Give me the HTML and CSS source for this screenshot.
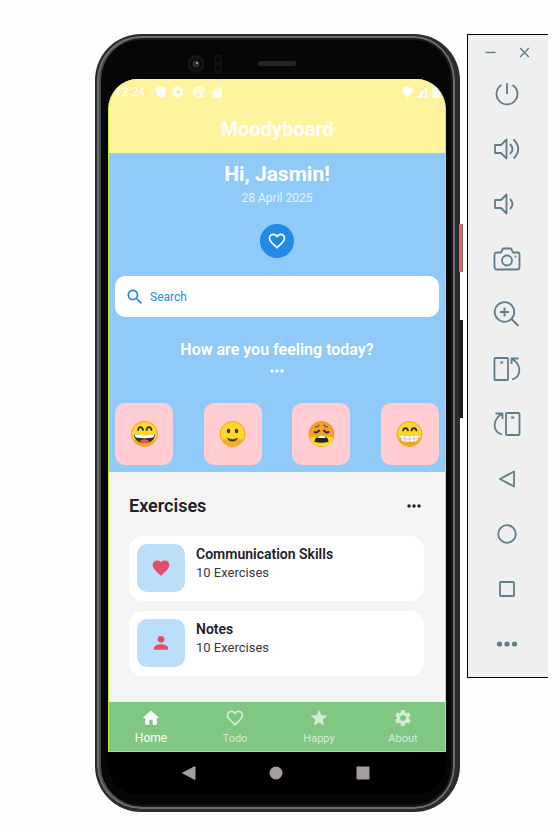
FILE: index.html
```html
<!DOCTYPE html>
<html lang="en">
<head>
<meta charset="utf-8">
<meta name="viewport" content="width=device-width, initial-scale=1">
<title>Moodyboard</title>
<link rel="stylesheet" href="styles.css">
</head>
<body>
<svg class="defs" aria-hidden="true">
  <symbol id="heart-line" viewBox="0 0 24 24"><path d="M16.500 3c-1.740 0-3.410.81-4.500 2.090C10.910 3.810 9.240 3 7.500 3 4.420 3 2 5.420 2 8.500c0 3.780 3.400 6.860 8.550 11.540L12 21.350l1.450-1.320C18.600 15.360 22 12.280 22 8.500 22 5.420 19.580 3 16.500 3zm-4.400 15.550l-.1.1-.1-.1C7.140 14.240 4 11.390 4 8.500 4 6.500 5.500 5 7.500 5c1.540 0 3.040.99 3.570 2.360h1.870C13.460 5.990 14.960 5 16.500 5c2 0 3.500 1.500 3.500 3.500 0 2.890-3.140 5.740-7.900 10.050z"/></symbol>
  <symbol id="heart" viewBox="0 0 24 24"><path d="M12 21.350l-1.450-1.320C5.400 15.360 2 12.280 2 8.500 2 5.420 4.420 3 7.500 3c1.740 0 3.410.81 4.500 2.090C13.090 3.810 14.760 3 16.500 3 19.580 3 22 5.420 22 8.500c0 3.780-3.400 6.860-8.550 11.540L12 21.350z"/></symbol>
  <symbol id="gear" viewBox="0 0 24 24"><path d="M19.140 12.940c.04-.3.060-.61.060-.94 0-.32-.02-.64-.07-.94l2.030-1.580c.18-.14.23-.41.120-.61l-1.920-3.320c-.12-.22-.37-.29-.59-.22l-2.390.96c-.5-.38-1.030-.7-1.620-.94l-.36-2.540c-.04-.24-.24-.41-.48-.41h-3.840c-.24 0-.43.17-.47.41l-.36 2.540c-.59.24-1.130.57-1.620.94l-2.390-.96c-.22-.08-.47 0-.59.22L2.740 8.870c-.12.21-.08.470.120.610l2.030 1.580c-.05.3-.09.630-.09.940s.020.640.070.940l-2.030 1.580c-.18.140-.23.410-.12.610l1.920 3.320c.12.220.370.290.590.220l2.390-.96c.5.380 1.030.7 1.620.94l.36 2.540c.05.240.240.410.480.410h3.840c.24 0 .44-.17.470-.41l.36-2.540c.59-.24 1.130-.56 1.620-.94l2.390.96c.22.080.470 0 .59-.22l1.920-3.320c.12-.22.070-.47-.12-.61l-2.010-1.580zM12 15.600c-1.980 0-3.600-1.620-3.600-3.600s1.620-3.600 3.600-3.600 3.600 1.620 3.600 3.600-1.620 3.600-3.600 3.600z"/></symbol>
  <symbol id="dots" viewBox="0 0 24 24"><circle cx="4.500" cy="12" r="2.600"/><circle cx="12" cy="12" r="2.600"/><circle cx="19.500" cy="12" r="2.600"/></symbol>
</svg>

<div class="desktop">
  <main class="phone">
    <span class="side-key power-key"></span>
    <span class="side-key volume-key"></span>
    <div class="bezel">
      <div class="sensors">
        <svg class="camera" viewBox="0 0 18 18"><circle cx="9" cy="9" r="9" fill="#151517"/><circle cx="9" cy="9" r="5.500" fill="#0b0b0d"/><circle cx="9" cy="9" r="3.500" fill="#2c2e31"/><circle cx="10" cy="8" r="1.200" fill="#8e9499"/></svg>
        <svg class="sensor" viewBox="0 0 8 18"><rect width="8" height="18" rx="3" fill="#131314"/><circle cx="4" cy="4.500" r="2.500" fill="#08080a"/><circle cx="4" cy="13" r="2.500" fill="#08080a"/></svg>
      </div>
      <span class="speaker"></span>
    </div>

    <div class="screen">
      <header class="app-bar">
        <div class="status">
          <span class="clock">12:24</span>
          <svg class="s-shield" viewBox="0 0 24 24"><path d="M12 1L2 4v7c0 6 4.300 10.500 10 12 5.700-1.500 10-6 10-12V4z"/></svg>
          <svg class="s-gear"><use href="#gear"/></svg>
          <svg class="s-radar" viewBox="0 0 24 24"><path d="M19.500 19.500A10.500 10.500 0 1 1 22.300 14M7 14.500A5.500 5.500 0 1 1 15.500 16M12 12l7.500 7.500M17 21h5" fill="none" stroke="currentColor" stroke-width="2.600"/><circle cx="12" cy="12" r="2.200"/></svg>
          <svg class="s-card" viewBox="0 0 24 24"><path fill-rule="evenodd" d="M21 1H10L2.500 8.500V21a2 2 0 0 0 2 2H19.500a2 2 0 0 0 2-2V2zM9 5h2v4H9zm4 0h2v4h-2zm4 0h2v4h-2z"/></svg>
          <span class="spacer"></span>
          <svg class="s-wifi" viewBox="0 0 24 22"><path d="M12 22L0 6C2 2.500 7 0 12 0s10 2.500 12 6z"/></svg>
          <svg class="s-signal" viewBox="0 0 22 22"><path fill-rule="evenodd" d="M22 0v22H0zM19.500 6L14 11.500V19.500h5.500z"/></svg>
          <svg class="s-battery" viewBox="0 0 14 22"><path d="M4 0h6v2h4v20H0V2h4z"/></svg>
        </div>
        <h1 class="brand">Moodyboard</h1>
      </header>

      <section class="today">
        <h2 class="greeting">Hi, Jasmin!</h2>
        <p class="date">28 April 2025</p>
        <button class="fav" type="button" aria-label="Favourite"><svg><use href="#heart-line"/></svg></button>
        <label class="search">
          <svg viewBox="0 0 24 24"><path d="M15.500 14h-.79l-.28-.27C15.410 12.590 16 11.110 16 9.500 16 5.910 13.090 3 9.500 3S3 5.910 3 9.500 5.910 16 9.500 16c1.610 0 3.090-.59 4.230-1.570l.27.28v.79l5 4.990L20.490 19l-4.990-5zm-6 0C7.010 14 5 11.990 5 9.500S7.010 5 9.500 5 14 7.010 14 9.500 11.990 14 9.500 14z"/></svg>
          <input type="text" placeholder="Search" aria-label="Search">
        </label>
        <h3 class="question">How are you feeling today?</h3>
        <button class="more" type="button" aria-label="More moods"><svg><use href="#dots"/></svg></button>
        <div class="moods">
          <button class="mood" type="button" aria-label="Happy">
            <svg viewBox="0 0 54 52"><ellipse cx="27" cy="26" rx="26" ry="25" fill="#fcd928" stroke="#f2a126" stroke-width="2"/><path d="M5 37q22 9 44 0C43 55 11 55 5 37z" fill="#f3a326"/><path d="M14 18q1-6 5-6t5 6M31 18q1-6 5-6t5 6" fill="none" stroke="#2b2620" stroke-width="3.500" stroke-linecap="round"/><path d="M6 26q21 5 42 0c0 11-8 18-21 18S6 37 6 26z" fill="#302b2c"/><path d="M7 26q20 5 40 0 0 5-3 7-17 3-34 0-3-2-3-7z" fill="#fff"/><path d="M17 40q10-7 20 0-4 4-10 4t-10-4z" fill="#ee594c"/></svg>
          </button>
          <button class="mood" type="button" aria-label="Good">
            <svg viewBox="0 0 54 52"><ellipse cx="27" cy="26" rx="25" ry="25" fill="#fcd928" stroke="#f2a126" stroke-width="2"/><path d="M4 36q23 3 46 0-6 14-23 14T4 36z" fill="#f5ae27"/><ellipse cx="19" cy="20" rx="3.500" ry="4.500" fill="#3a3025"/><ellipse cx="35" cy="20" rx="3.500" ry="4.500" fill="#3a3025"/><path d="M17 35q10 5 20 0-3 5-10 5t-10-5z" fill="#302820" stroke="#302820" stroke-width="1.500" stroke-linejoin="round"/></svg>
          </button>
          <button class="mood" type="button" aria-label="Weary">
            <svg viewBox="0 0 54 52"><ellipse cx="27" cy="26" rx="25" ry="25" fill="#f5a024" stroke="#eb9724" stroke-width="2"/><path d="M3 33q24-5 48 0-5 18-24 18T3 33z" fill="#fcd928"/><path d="M15 12q5 0 7-4M39 12q-5 0-7-4" fill="none" stroke="#7b4e20" stroke-width="2.500" stroke-linecap="round"/><path d="M13 22q5 3 9-3M41 22q-5 3-9-3" fill="none" stroke="#302820" stroke-width="4" stroke-linecap="round"/><path d="M13 42q0-12 14-12t14 12q-14 3-28 0z" fill="#282425"/><path d="M18 34q3-5 9-5t9 5z" fill="#fff"/></svg>
          </button>
          <button class="mood" type="button" aria-label="Grinning">
            <svg viewBox="0 0 54 52"><ellipse cx="27" cy="26" rx="25" ry="25" fill="#fcd928" stroke="#f2a126" stroke-width="2"/><path d="M4 34q23 9 46 0-5 16-23 16T4 34z" fill="#f3a326"/><path d="M14 19q1-5 5-5t5 5M31 19q1-5 5-5t5 5" fill="none" stroke="#2b2620" stroke-width="3.500" stroke-linecap="round"/><path d="M8 28q19 3 38 0 0 14-11 14H19Q8 42 8 28z" fill="#fff" stroke="#d5a642"/><path d="M10 35q17 3 34 0M18 29v12M27 30v12M36 29v12" fill="none" stroke="#bbb" stroke-width="1.500"/></svg>
          </button>
        </div>
      </section>

      <section class="exercises">
        <div class="section-head">
          <h2>Exercises</h2>
          <button class="more dark" type="button" aria-label="More exercises"><svg><use href="#dots"/></svg></button>
        </div>
        <article class="card">
          <span class="tile"><svg><use href="#heart"/></svg></span>
          <div><h3>Communication Skills</h3><p>10 Exercises</p></div>
        </article>
        <article class="card">
          <span class="tile"><svg viewBox="0 0 24 24"><circle cx="12" cy="7.500" r="4"/><path d="M3.500 20v-2c0-2.700 5-4.500 8.500-4.500s8.500 1.800 8.500 4.500v2z"/></svg></span>
          <div><h3>Notes</h3><p>10 Exercises</p></div>
        </article>
      </section>

      <nav class="tabs">
        <a class="tab active" href="#home"><svg viewBox="0 0 24 24"><path d="M10 20v-6h4v6h5v-8h3L12 3 2 12h3v8z"/></svg>Home</a>
        <a class="tab" href="#todo"><svg><use href="#heart-line"/></svg>Todo</a>
        <a class="tab" href="#happy"><svg viewBox="0 0 24 24"><path d="M12 17.270L18.180 21l-1.640-7.030L22 9.240l-7.190-.61L12 2 9.190 8.630 2 9.240l5.460 4.730L5.820 21z"/></svg>Happy</a>
        <a class="tab" href="#about"><svg><use href="#gear"/></svg>About</a>
      </nav>
    </div>

    <div class="system-nav">
      <button type="button" aria-label="Back"><svg viewBox="0 0 14 14"><path d="M13 .5v13L.5 7z" stroke="currentColor" stroke-linejoin="round"/></svg></button>
      <button type="button" aria-label="Home"><svg viewBox="0 0 14 14"><circle cx="7" cy="7" r="6.500"/></svg></button>
      <button type="button" aria-label="Recent"><svg viewBox="0 0 14 14"><rect x=".5" y=".5" width="13" height="13" rx="1"/></svg></button>
    </div>
  </main>

  <aside class="toolbar">
    <div class="window-keys">
      <button type="button" aria-label="Minimize"><svg viewBox="0 0 10 10"><path d="M.5 5h9"/></svg></button>
      <button type="button" aria-label="Close"><svg viewBox="0 0 10 10"><path d="M1 1l8 8M9 1L1 9"/></svg></button>
    </div>
    <button class="tool" type="button" aria-label="Power"><svg viewBox="0 0 28 28"><path d="M14 3v11M8.500 5a10.500 10.500 0 1 0 11 0"/></svg></button>
    <button class="tool" type="button" aria-label="Volume up"><svg viewBox="0 0 28 28"><path d="M2 10h6l5.500-5.500v19L8 18H2zM17 9q5 5 0 10M20.500 4.500q9.500 9.500 0 19"/></svg></button>
    <button class="tool" type="button" aria-label="Volume down"><svg viewBox="0 0 28 28"><path d="M2 10h6l5.500-5.500v19L8 18H2zM17 9q5 5 0 10"/></svg></button>
    <button class="tool" type="button" aria-label="Take screenshot"><svg viewBox="0 0 28 28"><path d="M3.500 7.500H8l2-4h8l2 4h4.500a2 2 0 0 1 2 2V22a2.500 2.500 0 0 1-2.500 2.500H4A2.500 2.500 0 0 1 1.500 22V9.500a2 2 0 0 1 2-2z"/><circle cx="14" cy="15.500" r="5"/><path d="M21.700 11.500h1.600"/></svg></button>
    <button class="tool" type="button" aria-label="Zoom"><svg viewBox="0 0 28 28"><circle cx="11.500" cy="12" r="9.800"/><path d="M18.500 19l7 7M7 12h9M11.500 7.500v9"/></svg></button>
    <button class="tool" type="button" aria-label="Rotate left"><svg viewBox="0 0 28 28"><rect x="1.500" y="3" width="13.500" height="22" rx="1"/><path d="M7.200 7.500h3M18.500 9V3.500h7M19 4c9 5 10.500 17 0 20.500"/></svg></button>
    <button class="tool" type="button" aria-label="Rotate right"><svg viewBox="0 0 28 28"><rect x="13" y="3" width="13.500" height="22" rx="1"/><path d="M18.200 7.500h3M9.500 9V3.500h-7M9 4c-9 5-10.500 17 0 20.500"/></svg></button>
    <button class="tool" type="button" aria-label="Back"><svg viewBox="0 0 28 28"><path d="M21 6.500v15L7 14z"/></svg></button>
    <button class="tool" type="button" aria-label="Home"><svg viewBox="0 0 28 28"><circle cx="14" cy="14" r="8.800"/></svg></button>
    <button class="tool" type="button" aria-label="Overview"><svg viewBox="0 0 28 28"><rect x="7" y="7" width="14" height="14" rx="1"/></svg></button>
    <button class="tool solid" type="button" aria-label="More"><svg viewBox="0 0 28 28"><circle cx="6.500" cy="14" r="2.600"/><circle cx="14" cy="14" r="2.600"/><circle cx="21.500" cy="14" r="2.600"/></svg></button>
  </aside>
</div>
</body>
</html>
```
FILE: styles.css
```css
* { box-sizing: border-box; }

body {
  margin: 0;
  background: #fefefe;
  font-family: Roboto, "Liberation Sans", sans-serif;
  color: #212226;
}

h1, h2, h3, p { margin: 0; }

button {
  padding: 0;
  border: 0;
  background: none;
  color: inherit;
  font: inherit;
  display: flex;
  align-items: center;
  justify-content: center;
}

svg { display: block; fill: currentColor; }

.defs { position: absolute; width: 0; height: 0; }

.desktop {
  display: flex;
  align-items: flex-start;
  gap: 7px;
  padding: 34px 12px 20px 95px;
}

/* Phone frame */
.phone {
  position: relative;
  flex: 1;
  min-width: 0;
  padding: 0 9px 15px 11px;
  border: solid #2b2c2e;
  border-width: 2px 5px 3px 2px;
  border-radius: 46px;
  background: #060608;
  box-shadow: inset 0 0 0 2px #6b6d70, inset 2px 0 0 2px #47494b, inset 0 0 0 4px #1b1b1d;
}

.side-key { position: absolute; right: -8px; width: 4px; }
.power-key { top: 188px; height: 48px; background: #e8644f; border-right: 1px solid #77706f; }
.volume-key { top: 284px; height: 98px; background: #1d1d1f; }

.bezel {
  display: grid;
  grid-template-columns: 1fr auto 1fr;
  align-items: center;
  height: 43px;
  padding-top: 12px;
}
.sensors { display: flex; justify-content: flex-end; align-items: center; gap: 9px; padding-right: 36px; }
.camera { width: 18px; height: 18px; }
.sensor { width: 8px; height: 18px; }
.speaker { width: 38px; height: 5px; border-radius: 2px; background: #252527; }

.screen {
  overflow: hidden;
  border: 1px solid #c3e63c;
  border-top: 0;
  border-radius: 30px 30px 0 0;
  background: #f4f4f4;
}

/* App bar */
.app-bar { height: 74px; background: #fff39d; color: #fff; }
.status { display: flex; align-items: center; height: 26px; padding-left: 6px; font-size: 12px; }
.clock { width: 40px; }
.s-shield { width: 12px; height: 12px; }
.s-gear { width: 14px; height: 14px; margin-left: 4px; }
.s-radar { width: 12px; height: 12px; margin-left: 8px; }
.s-card { width: 11px; height: 11px; margin-left: 7px; }
.spacer { flex: 1; }
.s-wifi { width: 13px; height: 11px; }
.s-signal { width: 11px; height: 11px; margin-left: 2px; }
.s-battery { width: 8px; height: 11px; margin: 0 5px; }
.brand { font-size: 20px; line-height: 48px; font-weight: 700; text-align: center; }

/* Mood panel */
.today {
  display: flex;
  flex-direction: column;
  align-items: center;
  padding: 8px 6px 7px;
  background: #90caf9;
  color: #fff;
}
.greeting { font-size: 21px; line-height: 26px; font-weight: 700; }
.date { margin-top: 3px; font-size: 12px; line-height: 16px; color: #e6f3fe; }
.fav { width: 34px; height: 34px; margin-top: 18px; border-radius: 50%; background: #2189e6; }
.fav svg { width: 20px; height: 20px; }
.search {
  display: flex;
  align-items: center;
  gap: 5px;
  align-self: stretch;
  height: 41px;
  margin-top: 18px;
  padding: 0 10px;
  border-radius: 10px;
  background: #fff;
  color: #2189e6;
}
.search svg { width: 20px; height: 20px; }
.search input {
  flex: 1;
  min-width: 0;
  padding: 0;
  border: 0;
  outline: 0;
  background: none;
  color: inherit;
  font: 12px/16px Roboto, "Liberation Sans", sans-serif;
}
.search input::placeholder { color: inherit; opacity: 1; }
.question { margin-top: 23px; font-size: 16px; line-height: 20px; font-weight: 600; }
.more { height: 16px; margin-top: 3px; }
.more svg { width: 16px; height: 16px; }
.moods { display: flex; justify-content: space-between; align-self: stretch; margin-top: 24px; }
.mood { width: 58px; height: 62px; border-radius: 10px; background: #ffcdd2; }
.mood svg { width: 27px; height: 26px; }

/* Exercise list */
.exercises { padding: 22px 21px 26px 20px; }
.section-head { display: flex; align-items: center; justify-content: space-between; height: 24px; margin-bottom: 18px; }
.section-head h2 { font-size: 18px; line-height: 24px; font-weight: 600; }
.more.dark { margin: 0 2px 0 0; }
.card {
  display: flex;
  gap: 11px;
  height: 65px;
  padding: 8px;
  border-radius: 14px;
  background: #fff;
}
.card + .card { margin-top: 10px; }
.tile {
  display: flex;
  align-items: center;
  justify-content: center;
  width: 48px;
  height: 48px;
  border-radius: 10px;
  background: #bbdefb;
  color: #e64d69;
}
.tile svg { width: 20px; height: 20px; }
.card h3 { font-size: 14px; line-height: 20px; font-weight: 600; }
.card p { font-size: 13px; line-height: 18px; color: #38393d; }

/* Bottom tabs */
.tabs { display: flex; height: 49px; background: #81c784; }
.tab {
  flex: 1;
  display: flex;
  flex-direction: column;
  align-items: center;
  gap: 3px;
  padding-top: 6px;
  color: #d3ecd4;
  font-size: 11px;
  line-height: 16px;
  text-decoration: none;
}
.tab.active { gap: 2px; color: #fff; font-size: 12px; }
.tab svg { width: 20px; height: 20px; }

.system-nav {
  display: flex;
  justify-content: space-around;
  align-items: center;
  height: 42px;
  padding: 0 39px 0 37px;
  border-radius: 0 0 30px 30px;
  background: #000;
  color: #a49da1;
}
.system-nav svg { width: 14px; height: 14px; }

/* Emulator toolbar */
.toolbar {
  width: 81px;
  padding-bottom: 5px;
  border: 1px solid #000;
  border-right: 0;
  background: #efefef;
  color: #607d8b;
}
.toolbar svg { fill: none; stroke: currentColor; stroke-width: 1.8; stroke-linejoin: round; }
.window-keys { display: flex; justify-content: space-between; align-items: center; height: 32px; padding: 3px 18px 0 17px; }
.window-keys svg { width: 11px; height: 11px; stroke-width: 1.3; }
.tool { width: 100%; height: 55px; padding: 0 2px 2px 0; }
.tool svg { width: 28px; height: 28px; }
.toolbar .solid svg { fill: currentColor; stroke: none; }
```
